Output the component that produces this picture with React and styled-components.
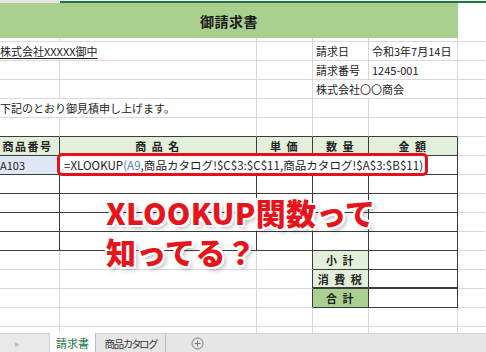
import React from 'react';
import styled, { createGlobalStyle } from 'styled-components';

const GRID = '#d9d9d9';
const DARK = '#3c3c3c';
const COLS = '60px 197px 56px 56px 89px 1fr';

const GlobalStyle = createGlobalStyle`
  html, body {
    margin: 0;
    padding: 0;
    background: #fff;
  }
  body {
    width: 486px;
    height: 352px;
    overflow: hidden;
    font-family: "Noto Sans CJK JP", "Noto Sans", sans-serif;
    color: #222;
  }
`;

const Screen = styled.div`
  position: relative;
  width: 486px;
  height: 352px;
  display: flex;
  flex-direction: column;
  overflow: hidden;
`;

const Sheet = styled.div`
  position: relative;
  flex: 1;
  overflow: hidden;
`;

const TopStrip = styled.div`
  display: grid;
  grid-template-columns: 60px 1fr;
  height: 3px;
  div:first-child {
    background: #e4e4e4;
  }
  div:last-child {
    background: #f3f3f3;
    border-bottom: 2px solid #217346;
    box-sizing: border-box;
  }
`;

const TitleBand = styled.div`
  display: grid;
  grid-template-columns: 458px 1fr;
  height: 35px;
`;

const Title = styled.div`
  background: #a9d08e;
  display: flex;
  align-items: center;
  justify-content: center;
  font-size: 14px;
  font-weight: 700;
  color: #1a1a1a;
  letter-spacing: 0.5px;
`;

const Row = styled.div`
  display: grid;
  grid-template-columns: ${COLS};
  height: ${p => p.$h || 19}px;
`;

const Cell = styled.div`
  box-sizing: border-box;
  grid-column: span ${p => p.$span || 1};
  border-right: 1px solid ${p => (p.$r ? DARK : p.$noR ? 'transparent' : GRID)};
  border-bottom: ${p => (p.$thick ? 2 : 1)}px solid ${p => (p.$b ? DARK : GRID)};
  background: ${p => p.$bg || 'transparent'};
  display: flex;
  align-items: center;
  justify-content: ${p => (p.$center ? 'center' : 'flex-start')};
  padding: ${p => (p.$pad === undefined ? '0 3px' : p.$pad)};
  font-size: 11px;
  font-weight: ${p => (p.$bold ? 700 : 400)};
  letter-spacing: ${p => (p.$bold ? '1.5px' : '0')};
  white-space: nowrap;
  overflow: visible;
  text-decoration: ${p => (p.$under ? 'underline' : 'none')};
  text-underline-offset: 2px;
`;

const Ref = styled.span`
  color: #4f81c7;
`;

const Formula = styled.span`
  font-size: 11.5px;
  letter-spacing: 0.05px;
`;

const RedFrame = styled.div`
  position: absolute;
  left: 57px;
  top: 153px;
  width: 371px;
  height: 23px;
  box-sizing: border-box;
  border: 3px solid #e60f1c;
  border-radius: 5px;
  pointer-events: none;
`;

const Caption = styled.div`
  position: absolute;
  left: 106px;
  top: 193px;
  font-size: 30px;
  line-height: 39px;
  font-weight: 900;
  color: #e8141c;
  letter-spacing: 0.3px;
  white-space: nowrap;
  text-shadow:
    2px 0 0 #fff, -2px 0 0 #fff, 0 2px 0 #fff, 0 -2px 0 #fff,
    2px 2px 0 #fff, -2px -2px 0 #fff, 2px -2px 0 #fff, -2px 2px 0 #fff,
    3px 3px 5px rgba(0, 0, 0, 0.35);
`;

const TabBar = styled.div`
  height: 18px;
  display: flex;
  align-items: stretch;
  background: #e6e6e6;
  border-top: 1px solid #d2d2d2;
  font-size: 11px;
`;

const Nav = styled.div`
  width: 50px;
  box-sizing: border-box;
  border-right: 1px solid #cfcfcf;
  background: #e9e9e9;
  color: #b8b8b8;
  display: flex;
  align-items: center;
  padding-left: 15px;
  font-size: 9px;
`;

const Tab = styled.div`
  width: ${p => p.$w}px;
  box-sizing: border-box;
  display: flex;
  align-items: center;
  justify-content: center;
  border-right: 1px solid #bdbdbd;
  background: ${p => (p.$active ? '#fff' : 'transparent')};
  color: ${p => (p.$active ? '#217346' : '#3a3a3a')};
  font-size: ${p => (p.$active ? 11 : 10.5)}px;
  letter-spacing: ${p => (p.$active ? '0' : '-1.3px')};
  font-feature-settings: "palt";
  margin-top: ${p => (p.$active ? '-1px' : '0')};
`;

const AddTab = styled.div`
  display: flex;
  align-items: center;
  padding-left: 25px;
`;

function PlusCircle() {
  return (
    <svg width="13" height="13" viewBox="0 0 13 13">
      <circle cx="6.5" cy="6.5" r="5.5" fill="none" stroke="#7a7a7a" strokeWidth="1" />
      <path d="M6.5 3.5v6M3.5 6.5h6" stroke="#7a7a7a" strokeWidth="1.1" />
    </svg>
  );
}

const TABLE_GAP_ROWS = [0, 1, 2, 3];

export default function App() {
  return (
    <Screen>
      <GlobalStyle />
      <Sheet>
        <TopStrip>
          <div />
          <div />
        </TopStrip>
        <TitleBand>
          <Title>御請求書</Title>
          <div />
        </TitleBand>
        <Row $h={4}>
          <Cell $pad="0" />
          <Cell $pad="0" />
          <Cell $pad="0" />
          <Cell $pad="0" />
          <Cell $pad="0" />
          <Cell $pad="0" $noR />
        </Row>

        <Row>
          <Cell $span={2} $pad="0" $under>株式会社XXXXX御中</Cell>
          <Cell />
          <Cell>請求日</Cell>
          <Cell>令和3年7月14日</Cell>
          <Cell $noR />
        </Row>
        <Row>
          <Cell />
          <Cell />
          <Cell />
          <Cell>請求番号</Cell>
          <Cell>1245-001</Cell>
          <Cell $noR />
        </Row>
        <Row>
          <Cell />
          <Cell />
          <Cell />
          <Cell $span={2}>株式会社〇〇商会</Cell>
          <Cell $noR />
        </Row>
        <Row>
          <Cell $span={2} $pad="0">下記のとおり御見積申し上げます。</Cell>
          <Cell />
          <Cell />
          <Cell />
          <Cell $noR />
        </Row>
        <Row>
          <Cell $b />
          <Cell $b />
          <Cell $b />
          <Cell $b />
          <Cell $b />
          <Cell $noR />
        </Row>

        <Row>
          <Cell $r $b $bold $center $bg="#e2efda" $pad="0 4px 0 0">商品番号</Cell>
          <Cell $r $b $bold $center $bg="#e2efda">商 品 名</Cell>
          <Cell $r $b $bold $center $bg="#e2efda">単 価</Cell>
          <Cell $r $b $bold $center $bg="#e2efda">数 量</Cell>
          <Cell $r $b $bold $center $bg="#e2efda">金 額</Cell>
          <Cell $noR />
        </Row>
        <Row>
          <Cell $r $b $bg="#dfe7f4" $pad="0">A103</Cell>
          <Cell $span={4} $r $b $pad="0 0 0 4px">
            <Formula>
              =XLOOKUP<Ref>(A9</Ref>,商品カタログ!$C$3:$C$11,商品カタログ!$A$3:$B$11)
            </Formula>
          </Cell>
          <Cell $noR />
        </Row>
        {TABLE_GAP_ROWS.map(i => (
          <Row key={i}>
            <Cell $r $b />
            <Cell $r $b />
            <Cell $r $b />
            <Cell $r $b />
            <Cell $r $b />
            <Cell $noR />
          </Row>
        ))}

        <Row>
          <Cell />
          <Cell />
          <Cell $r />
          <Cell $r $b $bold $center $bg="#e2efda">小 計</Cell>
          <Cell $r $b />
          <Cell $noR />
        </Row>
        <Row>
          <Cell />
          <Cell />
          <Cell $r />
          <Cell $r $b $thick $bold $center $bg="#e2efda">消 費 税</Cell>
          <Cell $r $b $thick />
          <Cell $noR />
        </Row>
        <Row>
          <Cell />
          <Cell />
          <Cell $r />
          <Cell $r $b $bold $center $bg="#a9d08e">合 計</Cell>
          <Cell $r $b />
          <Cell $noR />
        </Row>
        <Row>
          <Cell />
          <Cell />
          <Cell />
          <Cell />
          <Cell />
          <Cell $noR />
        </Row>
        <Row>
          <Cell />
          <Cell />
          <Cell />
          <Cell />
          <Cell />
          <Cell $noR />
        </Row>

        <RedFrame />
        <Caption>
          XLOOKUP関数って
          <br />
          知ってる？
        </Caption>
      </Sheet>
      <TabBar>
        <Nav>▸</Nav>
        <Tab $w={46} $active>請求書</Tab>
        <Tab $w={70}>商品カタログ</Tab>
        <AddTab>
          <PlusCircle />
        </AddTab>
      </TabBar>
    </Screen>
  );
}
